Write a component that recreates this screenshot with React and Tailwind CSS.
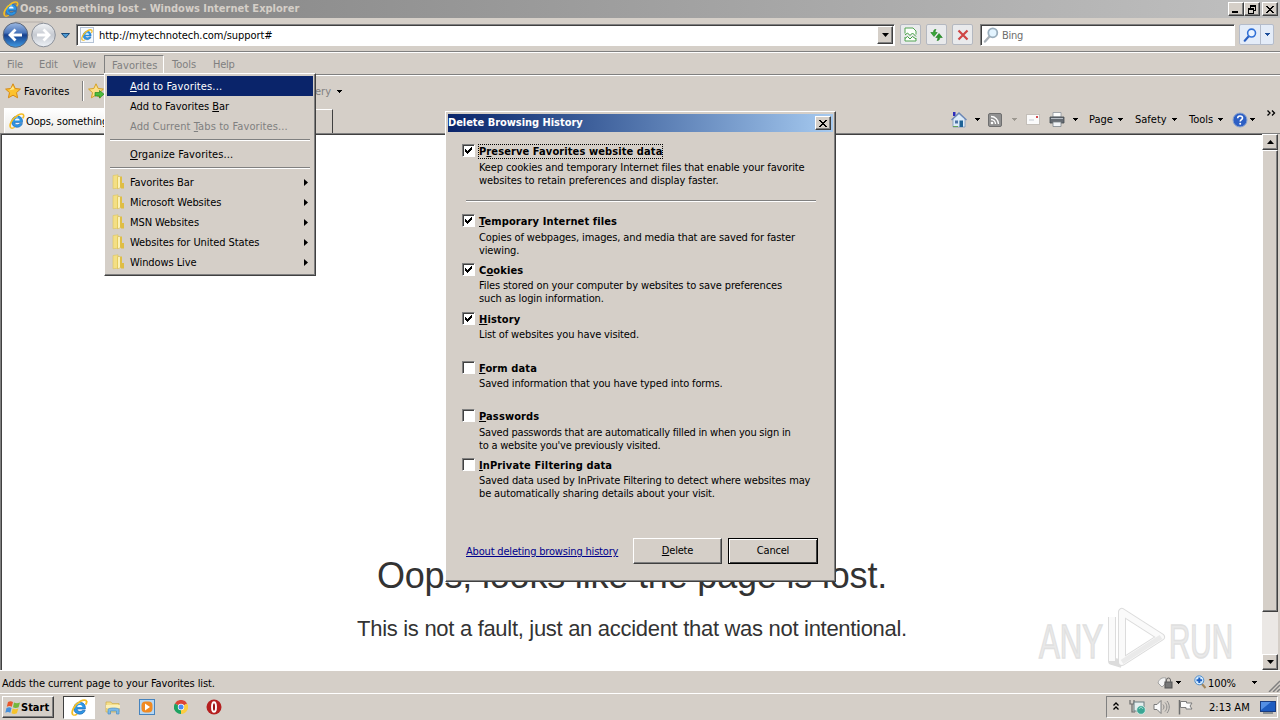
import React from 'react';

const raised = 'bg-[#d5cfc8] border border-t-white border-l-white border-r-[#404040] border-b-[#404040] shadow-[inset_-1px_-1px_0_#808080]';

const favoriteFolders = [
    'Favorites Bar',
    'Microsoft Websites',
    'MSN Websites',
    'Websites for United States',
    'Windows Live',
];

const historyOptions = [
    { key: 'T', rest: 'emporary Internet files', checked: true, height: 'h-[49px]', gap: 'mt-[3px] tracking-[-0.13px]', lines: ['Copies of webpages, images, and media that are saved for faster', 'viewing.'] },
    { before: 'C', key: 'o', rest: 'okies', checked: true, height: 'h-[49px]', gap: 'mt-[2px] tracking-[-0.13px]', lines: ['Files stored on your computer by websites to save preferences', 'such as login information.'] },
    { key: 'H', rest: 'istory', checked: true, height: 'h-[49px]', gap: 'mt-[2px] tracking-[-0.13px]', lines: ['List of websites you have visited.'] },
    { key: 'F', rest: 'orm data', checked: false, height: 'h-[48px]', gap: 'mt-[2px] tracking-[-0.15px]', lines: ['Saved information that you have typed into forms.'] },
    { key: 'P', rest: 'asswords', checked: false, height: 'h-[49px]', gap: 'mt-[3px] tracking-[-0.21px]', lines: ['Saved passwords that are automatically filled in when you sign in', "to a website you've previously visited."] },
    { key: 'I', rest: 'nPrivate Filtering data', checked: false, height: 'h-[49px]', gap: 'mt-[2px] tracking-[-0.14px]', lines: ['Saved data used by InPrivate Filtering to detect where websites may', 'be automatically sharing details about your visit.'] },
];

const Arrow = ({ className = 'fill-black' }) => (
    <svg width="5" height="3" viewBox="0 0 5 3" shapeRendering="crispEdges" className={`shrink-0 ${className}`}>
        <path d="M0 0h5v1h-1v1h-1v1h-1v-1h-1v-1h-1z" />
    </svg>
);

const IeIcon = ({ size = 16 }) => (
    <svg width={size} height={size} viewBox="0 0 16 16" className="shrink-0">
        <path d="M13.500 9.400H5.700c.1 1.500 1.200 2.300 2.700 2.300 1.100 0 1.900-.4 2.400-1.100h2.600c-.9 2.400-2.700 3.700-5.200 3.700-3.400 0-5.500-2.200-5.500-5.500s2.300-5.700 5.700-5.700c3.500 0 5.500 2.600 5.100 6.300z" fill="#2d96e4" stroke="#1560b0" strokeWidth=".6" />
        <path d="M5.800 7.500h4.900C10.500 6.200 9.700 5.600 8.300 5.600S6.100 6.200 5.800 7.500z" fill="#f2faff" />
        <path d="M4.300 5.600C5.400 4.200 7 3.900 9 4" stroke="#8ad8ff" strokeWidth="1" fill="none" />
        <path d="M2 15C-.6 12.500 3 5.500 8.800 2.200c3-1.700 5.600-1.600 5.900.2.200 1-.3 2-1 2.900" stroke="#f4bd24" strokeWidth="1.700" fill="none" />
        <path d="M2 15c1 .5 2.500 0 3.700-.8" stroke="#f4bd24" strokeWidth="1.300" fill="none" />
    </svg>
);

const FolderIcon = () => (
    <svg width="14" height="16" viewBox="0 0 14 16">
        <path d="M2 1.500L7 .8v13.400l-5 .6z" fill="#f3df85" stroke="#dcc45f" strokeWidth=".6" />
        <path d="M6.500 2.500H11v10.500l-4.500 2.200z" fill="#dfbf45" />
        <path d="M7 3h2v10.500l-2 1z" fill="#fbf2b8" />
        <path d="M10 9h3v5.500h-3z" fill="#dfbd44" />
    </svg>
);

const WindowButton = ({ children, className = '' }) => (
    <div className={`flex h-[14px] w-4 items-center justify-center ${raised} ${className}`}>{children}</div>
);

const CloseGlyph = () => (
    <svg width="8" height="7" viewBox="0 0 8 7" shapeRendering="crispEdges">
        <path d="M0 0h2v1h1v1h2v-1h1v-1h2v1h-1v1h-1v1h-1v1h1v1h1v1h1v1h-2v-1h-1v-1h-2v1h-1v1h-2v-1h1v-1h1v-1h1v-1h-1v-1h-1v-1h-1z" />
    </svg>
);

const TitleBar = () => (
    <div className="flex h-[18px] items-center bg-linear-to-r from-[#808080] to-[#c0c0c0] pl-[3px] pr-[2px]">
        <IeIcon />
        <span className="ml-px flex-1 pt-px text-[11px] font-bold text-[#d5cfc8]">Oops, something lost - Windows Internet Explorer</span>
        <WindowButton><div className="mt-[6px] mr-[3px] h-[2px] w-[6px] bg-black" /></WindowButton>
        <WindowButton>
            <svg width="9" height="9" viewBox="0 0 9 9" shapeRendering="crispEdges">
                <path d="M2 0h6v6h-2v3h-6v-6h2zM3 2v1h3v2h1v-3zM1 5v3h4v-3z" fillRule="evenodd" />
            </svg>
        </WindowButton>
        <WindowButton className="ml-[2px]"><CloseGlyph /></WindowButton>
    </div>
);

const NavButton = ({ children }) => (
    <div className="flex h-[21px] w-[21px] items-center justify-center rounded-[2px] border border-[#b4b8c0] bg-[#e9eaec]">{children}</div>
);

const Magnifier = ({ size, ring, glass, handle }) => (
    <svg width={size} height={size} viewBox="0 0 16 16" className="shrink-0">
        <path d="M6.500 9.500L2 14.500" stroke={handle} strokeWidth="2.400" strokeLinecap="round" />
        <circle cx="9.800" cy="5.800" r="4.500" fill={glass} stroke={ring} strokeWidth="1.800" />
    </svg>
);

const AddressRow = () => (
    <div className="flex h-[34px] items-center border-b border-[#808080]">
        <svg width="73" height="33" viewBox="0 0 73 33" className="shrink-0">
            <defs>
                <linearGradient id="back" x1="0" y1="0" x2="0" y2="1">
                    <stop offset="0" stopColor="#9db9e2" />
                    <stop offset=".4" stopColor="#4a76bc" />
                    <stop offset=".5" stopColor="#173f8c" />
                    <stop offset="1" stopColor="#3f9be4" />
                </linearGradient>
                <linearGradient id="fwd" x1="0" y1="0" x2="0" y2="1">
                    <stop offset="0" stopColor="#f2f4f7" />
                    <stop offset=".5" stopColor="#c6cad1" />
                    <stop offset="1" stopColor="#eef2f7" />
                </linearGradient>
            </defs>
            <path d="M15 4h28" stroke="#b4aea9" />
            <circle cx="15.500" cy="17" r="12.300" fill="url(#back)" stroke="#5c6678" />
            <path d="M22 17H11M15.500 11.500L10 17l5.500 5.500" stroke="#fff" strokeWidth="2.800" fill="none" />
            <circle cx="43.500" cy="17" r="11.800" fill="url(#fwd)" stroke="#8b9099" />
            <path d="M37 17H48M43.500 11.500L49 17l-5.500 5.500" stroke="#fff" strokeWidth="2.800" fill="none" />
            <path d="M61.500 15.500h8l-4 4.500z" fill="#4c9ad4" stroke="#1c4a78" />
        </svg>
        <div className="ml-[3px] flex h-[22px] w-[819px] items-center border border-t-[#808080] border-l-[#808080] border-r-white border-b-white bg-white shadow-[inset_1px_1px_0_#404040]">
            <div className="ml-[3px] flex h-4 w-[14px] items-center justify-center border border-[#b5c3d6] bg-[#f5f9fd]"><IeIcon size={12} /></div>
            <span className="ml-[5px] flex-1 pt-[4px] text-[11px] tracking-[-0.06px]">http://mytechnotech.com/support#</span>
            <div className={`mr-px flex h-[18px] w-4 items-center justify-center ${raised}`}><svg width="7" height="4" viewBox="0 0 7 4"><path d="M0 0h7L3.500 4z" /></svg></div>
        </div>
        <div className="ml-[5px] flex gap-[5px]">
            <NavButton>
                <svg width="13" height="15" viewBox="0 0 13 15">
                    <path d="M1 6.500V1h8l3 3v3.500M1 10v4h11v-3" fill="#fbfffb" stroke="#52a352" />
                    <path d="M1 8l2.500-2L6 8.500 8.500 6 12 9.500M1 11.500l2.500-2L6 12l2.500-2.500L12 12" fill="none" stroke="#3d9b3d" />
                </svg>
            </NavButton>
            <NavButton>
                <svg width="15" height="14" viewBox="0 0 15 14">
                    <path d="M7 1.500C4.500 1.500 4.500 3 4.500 4.500H1.800L5 8.500l3.200-4H6.200c0-1 0-2 .8-3z" fill="#38a838" stroke="#1f7d1f" strokeWidth=".6" />
                    <path d="M8 12.500c2.500 0 2.700-1.500 2.700-3h2.600L10 5.500l-3.200 4h2c0 1 0 2-.8 3z" fill="#2d962d" stroke="#1f7d1f" strokeWidth=".6" />
                </svg>
            </NavButton>
            <NavButton>
                <svg width="12" height="12" viewBox="0 0 12 12"><path d="M1.500 1.500l9 9M10.500 1.500l-9 9" stroke="#cf4545" strokeWidth="2.200" /></svg>
            </NavButton>
        </div>
        <div className="ml-[7px] flex h-[22px] w-[255px] items-center border border-t-[#808080] border-l-[#808080] border-r-white border-b-white bg-white shadow-[inset_1px_1px_0_#404040]">
            <div className="ml-[2px]"><Magnifier size={16} ring="#9aaebd" glass="#e3f4ff" handle="#a9b1b8" /></div>
            <span className="ml-[3px] pt-[4px] text-[11px] tracking-[-0.3px] text-[#6d6d6d]">Bing</span>
        </div>
        <div className="ml-[4px] flex h-[21px] w-[35px] rounded-[2px] border border-[#b4bccb] bg-[#e4ecf8]">
            <div className="flex w-[21px] items-center justify-center border-r border-[#b4bccb]"><Magnifier size={14} ring="#2f6fd6" glass="#eaf3ff" handle="#2a5fc0" /></div>
            <div className="flex flex-1 items-center justify-center"><Arrow className="fill-[#1d4f9c]" /></div>
        </div>
    </div>
);

const MenuBar = () => (
    <div className="flex h-[23px] border-t border-b border-t-white border-b-[#808080] text-[11px] leading-[23px] text-[#808080]">
        <span className="ml-[7px] w-[32px] tracking-[-0.1px]">File</span>
        <span className="w-[34px] tracking-[-0.1px]">Edit</span>
        <span className="w-[31px] tracking-[-0.1px]">View</span>
        <span className="mt-[2px] h-[19px] w-[60px] border-t border-l border-r border-t-[#808080] border-l-[#808080] border-r-white pl-[7px] leading-[20px] tracking-[0.1px]">Favorites</span>
        <span className="ml-[8px] w-[41px]">Tools</span>
        <span className="tracking-[-0.3px]">Help</span>
    </div>
);

const Star = () => (
    <svg width="16" height="16" viewBox="0 0 16 16">
        <path d="M8 .8l2.200 4.700 5.200.6-3.900 3.500 1.100 5.200L8 12.200l-4.600 2.600 1.100-5.200L.6 6.100l5.200-.6z" fill="#fcc22e" stroke="#d78a14" />
        <path d="M8 3l1.300 3.300-4.800 1z" fill="#ffe88e" />
    </svg>
);

const FavoritesBar = () => (
    <div className="flex h-[30px] items-center border-t border-white pl-[5px] text-[11px]">
        <Star />
        <span className="ml-[3px] w-[58px] pt-[3px] tracking-[0.1px]">Favorites</span>
        <div className="h-5 w-px bg-[#808080]" />
        <div className="h-5 w-px bg-white" />
        <svg width="18" height="16" viewBox="0 0 18 16" className="ml-[4px]">
            <path d="M8 .8l2.200 4.700 5.200.6-3.900 3.500 1.100 5.200L8 12.200l-4.600 2.600 1.100-5.200L.6 6.100l5.200-.6z" fill="#fbe08a" stroke="#d7a024" />
            <path d="M7 9.500h4.500V7.500l4.500 3.700-4.500 3.800v-2H7z" fill="#4cbc3c" stroke="#27861f" strokeWidth=".7" />
        </svg>
        <span className="ml-[125px] w-[100px] pt-[4px] text-right whitespace-nowrap text-[#808080]">Web Slice Gallery</span>
        <div className="ml-[6px] pt-px"><Arrow /></div>
    </div>
);

const CommandBar = () => (
    <div className="flex items-center pt-[5px] text-[11px]">
        <svg width="18" height="17" viewBox="0 0 18 17">
            <path d="M3 1h2.500v4H3z" fill="#2b2bbd" />
            <path d="M3 8v8h12V8L9 2.500z" fill="#dcebf8" stroke="#7d97bb" strokeWidth=".8" />
            <path d="M1.500 9L9 2l7.500 7" fill="none" stroke="#6b87b6" strokeWidth="1.300" />
            <path d="M9.500 9.500h3.500V16H9.500z" fill="#1e6396" />
            <path d="M5 9.500h3v3H5z" fill="#4c72a4" />
            <path d="M3 15.500h5" stroke="#66a355" />
        </svg>
        <div className="ml-[7px]"><Arrow /></div>
        <svg width="14" height="14" viewBox="0 0 14 14" className="ml-[8px]">
            <rect x=".5" y=".5" width="13" height="13" rx="1.500" fill="#919191" stroke="#6f6f6f" />
            <circle cx="4" cy="10" r="1.300" fill="#fff" />
            <path d="M3 6.500A4.500 4.500 0 017.500 11M3 3.500A7.500 7.500 0 0110.500 11" fill="none" stroke="#fff" strokeWidth="1.300" />
        </svg>
        <div className="ml-[10px]"><Arrow className="fill-[#9c9890]" /></div>
        <svg width="14" height="11" viewBox="0 0 14 11" className="ml-[9px]">
            <rect x=".5" y=".5" width="13" height="10" fill="#fbfbfb" stroke="#c4bfb9" />
            <rect x="10" y="2" width="2" height="2" fill="#d2494d" />
            <path d="M3 6h5" stroke="#c6cbd3" />
        </svg>
        <svg width="16" height="15" viewBox="0 0 16 15" className="ml-[9px]">
            <path d="M4 .5h8V5H4z" fill="#fdfdfd" stroke="#8d949c" strokeWidth=".8" />
            <path d="M1 5h14v6H1z" fill="#666c73" stroke="#454b52" strokeWidth=".8" />
            <path d="M2 6.500h12" stroke="#b9bfc6" />
            <path d="M4 10h8v4.500H4z" fill="#f1f4f7" stroke="#7e858c" strokeWidth=".8" />
        </svg>
        <div className="ml-[8px]"><Arrow /></div>
        <span className="ml-[11px] w-[29px] pt-[2px]">Page</span><Arrow />
        <span className="ml-[12px] w-[37px] pt-[2px]">Safety</span><Arrow />
        <span className="ml-[12px] w-[29px] pt-[2px]">Tools</span><Arrow />
        <svg width="16" height="16" viewBox="0 0 16 16" className="ml-[9px]">
            <circle cx="8" cy="8" r="7" fill="#2d5fc4" stroke="#8aa3cf" />
            <path d="M5.700 6.200C5.700 3.200 10.500 3.300 10.500 6c0 1.600-2.300 1.700-2.300 3.500" fill="none" stroke="#fff" strokeWidth="1.600" />
            <circle cx="8.200" cy="11.700" r="1" fill="#fff" />
        </svg>
        <div className="ml-[2px]"><Arrow /></div>
        <svg width="9" height="6" viewBox="0 0 9 6" className="mb-[13px] ml-[12px]"><path d="M.5.5L3 3 .5 5.500M5 .5L7.500 3 5 5.500" fill="none" stroke="#000" strokeWidth="1.300" /></svg>
    </div>
);

const TabRow = () => (
    <div className="flex h-[28px] justify-between">
        <div className="flex items-end">
            <div className="ml-[4px] flex h-[25px] w-[298px] items-center overflow-hidden border-t border-l border-white bg-linear-to-b from-white to-[#eceae7] pl-[4px] text-[11px]">
                <IeIcon size={16} />
                <span className="ml-[1px] pt-[3px] tracking-[-0.12px]">Oops, something lost</span>
            </div>
            <div className="h-[24px] w-[31px] border-t border-r border-t-white border-r-[#404040] bg-[#d5cfc8]" />
        </div>
        <div className="pr-[4px]"><CommandBar /></div>
    </div>
);

const Scrollbar = () => (
    <div className="flex w-4 flex-col bg-[#ebe8e5]">
        <div className={`flex h-4 items-center justify-center ${raised}`}><svg width="7" height="4" viewBox="0 0 7 4"><path d="M0 4h7L3.500 0z" /></svg></div>
        <div className={`h-[462px] ${raised}`} />
        <div className="flex-1" />
        <div className={`flex h-4 items-center justify-center ${raised}`}><svg width="7" height="4" viewBox="0 0 7 4"><path d="M0 0h7L3.500 4z" /></svg></div>
    </div>
);

const Watermark = () => (
    <svg width="210" height="66" viewBox="0 0 210 66" className="absolute top-[471px] left-[1032px]">
        <g fontFamily="Liberation Sans Narrow, Liberation Sans, sans-serif" fontSize="48" fill="#e9e9e9" stroke="#e0e0e0" strokeWidth="1.500">
            <text x="6" y="53" textLength="64" lengthAdjust="spacingAndGlyphs">ANY</text>
            <text x="136" y="53" textLength="64" lengthAdjust="spacingAndGlyphs">RUN</text>
        </g>
        <g strokeLinejoin="round" fill="none">
            <path d="M79 12v44l10 3M89 7v50l39-25z" stroke="#dcdcdc" strokeWidth="8" />
            <path d="M79 12v44M89 7v50l39-25z" stroke="#fafafa" strokeWidth="6" />
            <path d="M89 57l39-25" stroke="#eaeaea" strokeWidth="5" />
        </g>
    </svg>
);

const PageView = () => (
    <div className="relative flex h-[537px] border-t border-l border-[#808080]">
        <div className="flex-1 border-t border-l border-[#404040] bg-white text-center font-[Liberation_Sans,Arial,sans-serif] text-[#333]">
            <h1 className="mt-[420px] text-[36px] leading-[42px] tracking-[-0.18px]">Oops, looks like the page is lost.</h1>
            <p className="mt-[18px] text-[22px] leading-[28px] tracking-[-0.3px]">This is not a fault, just an accident that was not intentional.</p>
        </div>
        <Scrollbar />
        <div className="w-[2px] bg-[#d5cfc8]" />
        <Watermark />
    </div>
);

const StatusBar = () => (
    <div className="flex h-[23px] items-center border-t border-white text-[11px]">
        <span className="ml-[2px] flex-1 pt-[4px] tracking-[-0.1px]">Adds the current page to your Favorites list.</span>
        <svg width="16" height="14" viewBox="0 0 16 14" className="mr-[2px]">
            <path d="M1 8c1-4 4-6 8-5l-1 6-3 3z" fill="#f5f5f5" stroke="#a3a3a3" />
            <rect x="8" y="7" width="7" height="6" fill="#777" stroke="#555" />
            <path d="M9.500 7V5a2 2 0 014 0v2" fill="none" stroke="#666" />
        </svg>
        <div className="ml-px pt-px"><Arrow /></div>
        <svg width="13" height="14" viewBox="0 0 13 14" className="ml-[13px]">
            <path d="M7.500 8.500L11.500 13" stroke="#a1855c" strokeWidth="2" />
            <circle cx="5.300" cy="5.300" r="4.500" fill="#d5ecff" stroke="#4c8ccc" />
            <path d="M5.300 2.500v5.600M2.500 5.300h5.600" stroke="#1d5fc0" strokeWidth="2" />
        </svg>
        <span className="ml-[1px] w-[44px] pt-[4px] tracking-[-0.1px]">100%</span>
        <div className="pt-px"><Arrow /></div>
        <svg width="12" height="12" viewBox="0 0 12 12" className="mt-[8px] ml-[11px]"><path d="M1 12L12 1M5 12l7-7M9 12l3-3" stroke="#808080" strokeWidth="1.500" /></svg>
    </div>
);

const Taskbar = () => (
    <div className="flex h-[27px] items-center border-t border-white pl-[2px] text-[11px]">
        <div className={`flex h-[22px] w-[52px] items-center pl-[2px] ${raised}`}>
            <svg width="16" height="15" viewBox="0 0 16 15" className="shrink-0">
                <path d="M3 2c2-1.200 3.500-1 5 0L6.800 6.800c-1.600-1-3.200-1-5 0z" fill="#e8572c" />
                <path d="M9 2.500c2 1 3.800 1 6 0l-1.400 4.800c-2 1-3.900 1-5.600 0z" fill="#74b73b" />
                <path d="M1.500 8c2-1 3.500-1 5 0l-1.200 4.800c-1.600-1-3.200-1-5 0z" fill="#4590dd" />
                <path d="M7.700 8.500c2 1 3.500 1 5.600 0l-1.400 4.800c-2 1-3.700 1-5.400 0z" fill="#f6c32a" />
            </svg>
            <span className="pt-[2px] text-[11px] font-bold">Start</span>
        </div>
        <div className="ml-[9px] flex h-[23px] w-[32px] items-center justify-center border border-t-[#404040] border-l-[#404040] border-r-white border-b-white bg-white"><IeIcon size={17} /></div>
        <svg width="16" height="16" viewBox="0 0 16 16" className="ml-[10px]">
            <path d="M1 3h5l1 1.500h7V13H1z" fill="#f5df8a" stroke="#cfae4c" strokeWidth=".7" />
            <path d="M1 6h14v3H1z" fill="#fbf0b8" />
            <path d="M3 15v-4.500C3 8.500 14 8.500 14 10.500V15h-2.500v-3h-6v3z" fill="#7cb9e8" stroke="#4c8fc6" strokeWidth=".7" />
        </svg>
        <svg width="16" height="16" viewBox="0 0 16 16" className="ml-[18px]">
            <rect x=".5" y=".5" width="15" height="15" fill="#b5d7f4" stroke="#4683bd" />
            <rect x="2.500" y="2.500" width="11" height="11" rx="4" fill="#f08a22" />
            <path d="M6 4.500l5 3.500-5 3.500z" fill="#fff" />
        </svg>
        <svg width="14" height="14" viewBox="0 0 14 14" className="ml-[19px]">
            <path d="M7 7L.9 3.500A7 7 0 0113.100 3.500z" fill="#dc4437" />
            <path d="M7 7L.9 3.500A7 7 0 007 14z" fill="#1da261" />
            <path d="M7 7l6.100-3.500A7 7 0 017 14z" fill="#fccd41" />
            <circle cx="7" cy="7" r="3.200" fill="#fff" />
            <circle cx="7" cy="7" r="2.500" fill="#4a8af4" />
        </svg>
        <svg width="16" height="16" viewBox="0 0 16 16" className="ml-[18px]">
            <circle cx="8" cy="8" r="7.500" fill="#b51f1f" />
            <ellipse cx="8" cy="8" rx="2" ry="4.800" fill="#9a1414" stroke="#fff" strokeWidth="1.900" />
        </svg>
        <div className="ml-auto mr-[2px] flex h-[22px] w-[172px] items-center border border-t-[#808080] border-l-[#808080] border-r-white border-b-white pl-[6px]">
            <svg width="6" height="9" viewBox="0 0 6 9" className="mb-[2px]"><path d="M.5 3.500L3 1l2.500 2.500M.5 7.500L3 5l2.500 2.500" fill="none" stroke="#000" strokeWidth="1.300" /></svg>
            <svg width="17" height="16" viewBox="0 0 17 16" className="ml-[10px]">
                <path d="M1 1v4h4V1M3 5v8h3" fill="none" stroke="#6c6c6c" strokeWidth="1.200" />
                <rect x="5" y="3" width="10" height="9" fill="#e4eeee" stroke="#687c80" />
                <circle cx="12" cy="11" r="4.300" fill="#3ba694" stroke="#e4f4ef" strokeWidth=".7" />
                <path d="M10 10c1-2 3-2 4 0" fill="none" stroke="#b6e3da" />
            </svg>
            <svg width="17" height="16" viewBox="0 0 17 16" className="ml-[7px]">
                <path d="M1 5.500h3l4-4v13l-4-4H1z" fill="#fafafa" stroke="#7b7b7b" />
                <path d="M10 5.500c1.300 1.500 1.300 3.500 0 5M12 3.500c2.500 2.500 2.500 6.500 0 9M14 2c3 3.500 3 8.500 0 12" fill="none" stroke="#8a8a8a" />
            </svg>
            <svg width="16" height="16" viewBox="0 0 16 16" className="ml-[7px]">
                <path d="M2.500 1v14.500" stroke="#6f6f6f" strokeWidth="1.500" />
                <path d="M3.500 2.500h6v1.500h5.500l-2 3 2 3H9V8.500H3.500z" fill="#fbfbfb" stroke="#7b7b7b" />
            </svg>
            <span className="ml-[16px] w-[51px] pt-[2px]">2:13 AM</span>
            <svg width="16" height="13" viewBox="0 0 16 13">
                <rect x=".5" y=".5" width="15" height="10" fill="#1e5cc0" stroke="#1a3c80" />
                <path d="M1 1h10L1 9z" fill="#548fe4" />
                <path d="M3 12h10" stroke="#44525f" />
            </svg>
        </div>
    </div>
);

const MenuSeparator = () => <div className="mx-[3px] my-[3px] h-[2px] border-t border-[#808080] bg-white" />;

const FavoritesMenu = () => (
    <div className={`absolute top-[73px] left-[104px] w-[212px] px-[2px] pt-[2px] pb-[3px] text-[11px] leading-[22px] ${raised}`}>
        <div className="h-5 bg-[#0a246a] pl-[23px] tracking-[0.15px] text-white"><u>A</u>dd to Favorites...</div>
        <div className="h-5 pl-[23px] tracking-[-0.05px]">Add to Favorites <u>B</u>ar</div>
        <div className="h-5 pl-[23px] tracking-[0.1px] text-[#808080]">Add Current <u>T</u>abs to Favorites...</div>
        <MenuSeparator />
        <div className="h-5 pl-[23px] tracking-[0.08px]"><u>O</u>rganize Favorites...</div>
        <MenuSeparator />
        {favoriteFolders.map((name) => (
            <div key={name} className="flex h-5 items-center pr-[5px] pl-[4px]">
                <FolderIcon />
                <span className="ml-[5px] flex-1 pt-[2px] tracking-[-0.08px]">{name}</span>
                <svg width="4" height="7" viewBox="0 0 4 7"><path d="M0 0v7L4 3.500z" /></svg>
            </div>
        ))}
    </div>
);

const Checkbox = ({ checked }) => (
    <div className="flex h-[13px] w-[13px] shrink-0 items-center justify-center border border-t-[#808080] border-l-[#808080] border-r-white border-b-white bg-white shadow-[inset_1px_1px_0_#404040]">
        {checked && (
            <svg width="7" height="7" viewBox="0 0 7 7" shapeRendering="crispEdges"><path d="M0 2h1v1h1v1h1v-1h1v-1h1v-1h1v-1h1v3h-1v1h-1v1h-1v1h-1v1h-1v-1h-1v-1h-1z" /></svg>
        )}
    </div>
);

const DialogButton = ({ children, className }) => (
    <div className={`flex h-[26px] items-center justify-center bg-[#d5cfc8] pt-px ${className}`}>{children}</div>
);

const DeleteHistoryDialog = () => (
    <div className={`absolute top-[111px] left-[445px] h-[471px] w-[391px] p-[2px] text-[11px] ${raised}`}>
        <div className="flex h-[18px] items-center justify-between bg-linear-to-r from-[#0a246a] to-[#a6caf0] pr-[2px]">
            <span className="font-bold tracking-[-0.04px] text-white">Delete Browsing History</span>
            <WindowButton><CloseGlyph /></WindowButton>
        </div>
        <div className="flex h-[69px] pt-[12px] pl-[14px]">
            <Checkbox checked />
            <div className="ml-[3px]">
                <div className="w-fit border border-dotted border-black leading-[13px] font-bold tracking-[0.1px]">P<u>r</u>eserve Favorites website data</div>
                <div className="mt-[2px] ml-px leading-[13px] tracking-[-0.13px] whitespace-nowrap">
                    <div>Keep cookies and temporary Internet files that enable your favorite</div>
                    <div className="tracking-[-0.1px]">websites to retain preferences and display faster.</div>
                </div>
            </div>
        </div>
        <div className="-mt-px ml-[18px] h-[2px] w-[350px] border-t border-[#808080] bg-white" />
        <div className="pt-[12px] pl-[14px]">
            {historyOptions.map((option) => (
                <div key={option.key} className={`flex ${option.height}`}>
                    <Checkbox checked={option.checked} />
                    <div className="ml-[4px] pt-px leading-[13px] whitespace-nowrap">
                        <div className="font-bold tracking-[0.12px]">{option.before}<u>{option.key}</u>{option.rest}</div>
                        <div className={option.gap}>
                            {option.lines.map((line) => <div key={line}>{line}</div>)}
                        </div>
                    </div>
                </div>
            ))}
        </div>
        <div className="mt-[31px] flex items-center pl-[18px]">
            <span className="w-[167px] pt-[3px] tracking-[-0.18px] whitespace-nowrap text-[#00008b] underline">About deleting browsing history</span>
            <DialogButton className="w-[89px] border border-t-white border-l-white border-r-[#404040] border-b-[#404040] tracking-[-0.2px] shadow-[inset_-1px_-1px_0_#808080]"><span><u>D</u>elete</span></DialogButton>
            <DialogButton className="ml-[6px] w-[90px] border border-black tracking-[-0.2px] shadow-[inset_1px_1px_0_#fff,inset_-1px_-1px_0_#404040]">Cancel</DialogButton>
        </div>
    </div>
);

export default function App() {
    return (
        <div className="relative flex h-[720px] w-[1280px] flex-col overflow-hidden bg-[#d5cfc8] font-[DejaVu_Sans_Condensed,DejaVu_Sans,sans-serif] text-black">
            <TitleBar />
            <AddressRow />
            <MenuBar />
            <FavoritesBar />
            <TabRow />
            <PageView />
            <StatusBar />
            <Taskbar />
            <FavoritesMenu />
            <DeleteHistoryDialog />
        </div>
    );
}
